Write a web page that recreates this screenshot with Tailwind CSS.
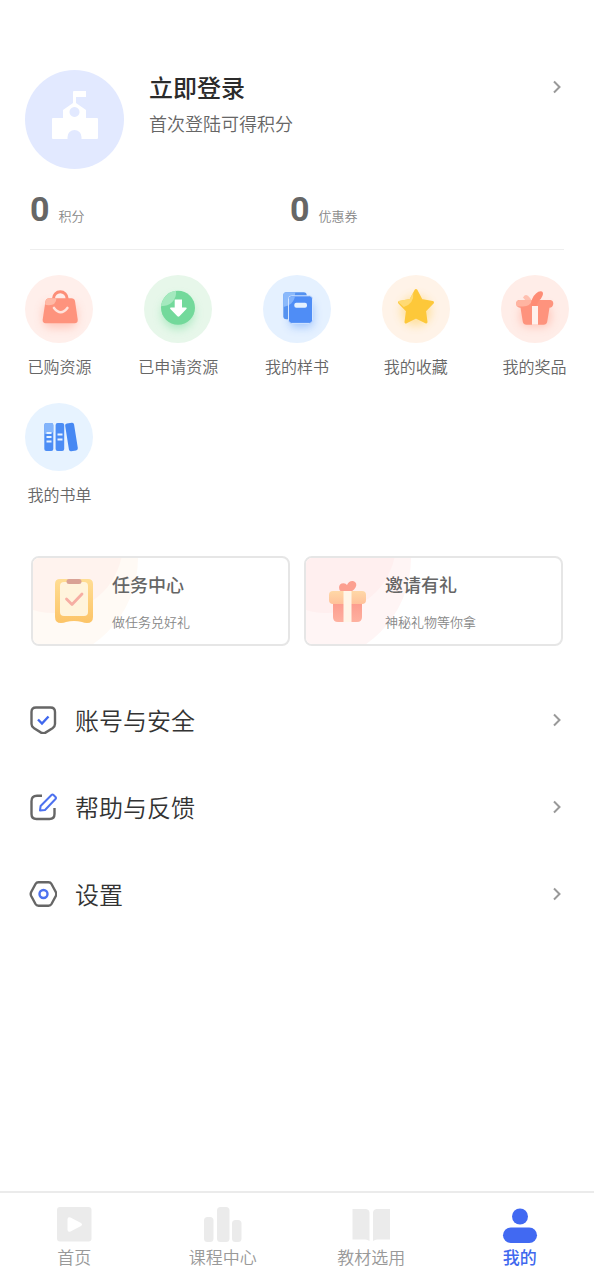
<!DOCTYPE html>
<html lang="zh-CN">
<head>
<meta charset="utf-8">
<meta name="viewport" content="width=device-width, initial-scale=1">
<title>我的</title>
<script src="https://cdn.jsdelivr.net/npm/@tailwindcss/browser@4"></script>
</head>
<body class="flex min-h-screen flex-col bg-white font-['Noto_Sans_CJK_SC',sans-serif] font-[350] text-[#666666]">
<main class="flex-1">
  <header>
    <a href="#login" class="flex items-start pt-[70px] pr-8 pl-[25px]">
      <svg class="size-[99px] shrink-0" viewBox="0 0 99 99" aria-hidden="true">
        <circle cx="49.500" cy="49.500" r="49.500" fill="#e2e9ff"/>
        <path fill="#fff" fill-rule="evenodd" d="M28 48h10v-8l10-7V22q0-1 1-1h12v6H51v6l10 7v8h11q1 0 1 1v19q0 1-1 1H56.500v-2a7 7 0 0 0-14 0v2H28q-1 0-1-1V49q0-1 1-1zM49.500 37a5 5 0 1 0 .01 0z"/>
      </svg>
      <div class="ml-[25px] flex-1">
        <h1 class="text-2xl leading-[34px] font-medium text-[#2b2b2b]">立即登录</h1>
        <p class="text-lg leading-[38px]">首次登陆可得积分</p>
      </div>
      <svg class="mt-[9px] h-4 w-[10px]" viewBox="0 0 10 16" fill="none" stroke="#999" stroke-width="2" aria-hidden="true"><path d="M2 2.500l5.500 5.500L2 13.500"/></svg>
    </a>
    <dl class="mx-[30px] mt-5 grid grid-cols-[260px_1fr] border-b border-[#eeeeee] pb-5">
      <div class="flex flex-row-reverse items-baseline justify-end gap-[9px]">
        <dt class="text-[13px] text-[#888888]">积分</dt>
        <dd class="font-[Roboto,sans-serif] text-[34px] leading-10 font-bold">0</dd>
      </div>
      <div class="flex flex-row-reverse items-baseline justify-end gap-[9px]">
        <dt class="text-[13px] text-[#888888]">优惠券</dt>
        <dd class="font-[Roboto,sans-serif] text-[34px] leading-10 font-bold">0</dd>
      </div>
    </dl>
  </header>

  <nav aria-label="我的资源" class="mt-[25px] grid grid-cols-5 gap-y-[25px] text-base leading-6">
    <a href="#bought" class="flex flex-col items-center gap-[11px]">
      <svg class="size-[68px]" viewBox="0 0 68 68" aria-hidden="true">
        <defs>
          <filter id="soft" x="-50%" y="-50%" width="200%" height="200%"><feGaussianBlur stdDeviation="5"/></filter>
        </defs>
        <circle cx="34" cy="34" r="34" fill="#ffefeb"/>
        <rect x="18" y="28" width="34" height="25" rx="8" fill="#ff8f78" opacity=".4" filter="url(#soft)"/>
        <path d="M28.500 26v-2.500a6.800 6.800 0 0 1 13.600 0V26" fill="none" stroke="#fc8e78" stroke-width="3"/>
        <path d="M24 23.300h22.500q2.800 0 3.500 2.700l2.700 18.500q.3 3.800-3 3.800h-29q-3.300 0-3-3.800L20.500 26q.7-2.700 3.500-2.700z" fill="#fe937d"/>
        <path d="M21 25q1-1.700 3-1.700h7.500q-.5 7-7.500 7-3.500 0-4-1z" fill="#ffb9a6"/>
        <path d="M29 33q6.700 8.500 13.400 0" fill="none" stroke="#ffe3dc" stroke-width="2.600" stroke-linecap="round"/>
      </svg>
      <span>已购资源</span>
    </a>
    <a href="#applied" class="flex flex-col items-center gap-[11px]">
      <svg class="size-[68px]" viewBox="0 0 68 68" aria-hidden="true">
        <circle cx="34" cy="34" r="34" fill="#e7f7ea"/>
        <circle cx="34" cy="38" r="16" fill="#6fdc98" opacity=".5" filter="url(#soft)"/>
        <circle cx="34" cy="32.700" r="17" fill="#73d99b"/>
        <path d="M17.100 31A17 17 0 0 1 32 15.800 13.500 13.500 0 0 1 17.100 31z" fill="#a4e9be"/>
        <path d="M30.700 24.500h7.300v8h4.200q1 .5.200 1.500l-7 7.300q-1 .9-2 0l-7-7.300q-.8-1 .2-1.500h4.100z" fill="#fff"/>
      </svg>
      <span>已申请资源</span>
    </a>
    <a href="#samples" class="flex flex-col items-center gap-[11px]">
      <svg class="size-[68px]" viewBox="0 0 68 68" aria-hidden="true">
        <circle cx="34" cy="34" r="34" fill="#e5f1ff"/>
        <rect x="27" y="28" width="23" height="24" rx="4" fill="#4f8ff8" opacity=".45" filter="url(#soft)"/>
        <rect x="20.300" y="17.300" width="23.400" height="27" rx="3" fill="#5592f0"/>
        <path d="M20.300 31V20.300q0-3 3-3h9q-1 13-12 14.700z" fill="#8ab9fb"/>
        <rect x="25.500" y="20.800" width="24" height="27.600" rx="3" fill="#4f8df6" stroke="#d5e6ff" stroke-width="1"/>
        <path d="M26 30v-6q0-2.700 3-2.700h3q-1 6-6 8.700z" fill="#80b1fb"/>
        <rect x="31.300" y="27.700" width="12.700" height="5" rx="2" fill="#e5f1ff"/>
      </svg>
      <span>我的样书</span>
    </a>
    <a href="#favorites" class="flex flex-col items-center gap-[11px]">
      <svg class="size-[68px]" viewBox="0 0 68 68" aria-hidden="true">
        <circle cx="34" cy="34" r="34" fill="#fff3e8"/>
        <circle cx="34" cy="36" r="15" fill="#ffca45" opacity=".45" filter="url(#soft)"/>
        <path d="M34 15.500l5.200 10 11.300 2-8 8.200 1.500 11.300-10-5-10 5 1.500-11.300-8-8.200 11.300-2z" fill="#fdc83a" stroke="#fdc83a" stroke-width="3" stroke-linejoin="round"/>
        <path d="M16.500 26l11.300-2 3.500-6.500q1 11-9.500 14.500l-5-4.500q-.8-.7-.3-1.500z" fill="#ffda73"/>
      </svg>
      <span>我的收藏</span>
    </a>
    <a href="#prizes" class="flex flex-col items-center gap-[11px]">
      <svg class="size-[68px]" viewBox="0 0 68 68" aria-hidden="true">
        <circle cx="34" cy="34" r="34" fill="#ffede8"/>
        <rect x="19" y="30" width="31" height="22" rx="8" fill="#ff8f78" opacity=".4" filter="url(#soft)"/>
        <path d="M22 22.500q3-5 7 .5l2 3h-6z" fill="#ffc0b0"/>
        <path d="M18 25h31.500q3 .5 2.800 4-.6 3.500-3.800 3.800l-2.300 14q-.6 2.900-3.700 2.900h-17q-3.100 0-3.700-2.900l-2.300-14q-3.700-.3-4.200-3.800-.3-3.500 2.700-4z" fill="#fe937d"/>
        <path d="M18 25h13q-1.500 6.500-9 6.500h-6q-1-1-1-3 .3-3 3-3.500z" fill="#ffb4a1"/>
        <path d="M30 31q.2-8.500 5-12.500 3-2.800 6-2 1.800 1.500.4 4.500-1.400 3.500-3.400 4.500l-3 5.500z" fill="#fe8c75"/>
        <path d="M31 31h6v18.700h-6z" fill="#fff1ed"/>
      </svg>
      <span>我的奖品</span>
    </a>
    <a href="#booklist" class="flex flex-col items-center gap-[11px]">
      <svg class="size-[68px]" viewBox="0 0 68 68" aria-hidden="true">
        <circle cx="34" cy="34" r="34" fill="#e7f3ff"/>
        <rect x="19.300" y="20" width="9" height="28" rx="2" fill="#4c8df5"/>
        <path d="M19.300 31v-9q0-2 2-2h5q2 0 2 2v7q-3 2-9 2z" fill="#83b4fb"/>
        <rect x="30.600" y="20" width="8.600" height="28" rx="2" fill="#4c8df5"/>
        <rect x="42" y="20" width="9" height="28" rx="2" fill="#4688f3" transform="rotate(-9 46.300 34)"/>
        <g stroke="#e7f3ff" stroke-width="2"><path d="M21.500 30h5M21.500 34h5M21.500 38.500h5M32.500 31.500h5M32.500 36.500h5"/></g>
      </svg>
      <span>我的书单</span>
    </a>
  </nav>

  <section aria-label="活动" class="mx-[31px] mt-[50px] grid grid-cols-2 gap-[14px]">
    <a href="#tasks" class="relative flex h-[90px] items-center overflow-hidden rounded-lg border-2 border-[#e6e6e6] pl-[22px]">
      <svg class="absolute top-0 left-0 h-[86px] w-28" viewBox="0 0 112 86" aria-hidden="true">
        <circle cx="0" cy="0" r="105" fill="#fffaf5"/><circle cx="20" cy="-15" r="70" fill="#fff3ee"/>
      </svg>
      <svg class="relative h-[46px] w-[38px]" viewBox="0 0 38 46" aria-hidden="true">
        <defs><linearGradient id="board" x2="0" y2="1"><stop stop-color="#ffdd94"/><stop offset="1" stop-color="#fcc467"/></linearGradient></defs>
        <path d="M5 1h28q5 0 5 5v33q0 6-6 6-3 0-5-1-8-2-16 0-2 1-5 1-6 0-6-6V6q0-5 5-5z" fill="url(#board)"/>
        <rect x="5" y="4" width="28" height="34" rx="4" fill="#fff4dc"/>
        <rect x="11.500" y="1" width="15" height="5" rx="2.500" fill="#d9a295"/>
        <path d="M11.500 21l5.500 5.500L27 16" fill="none" stroke="#f6aea3" stroke-width="2.800" stroke-linecap="round" stroke-linejoin="round"/>
      </svg>
      <div class="relative ml-[19px]">
        <h2 class="text-lg leading-7 font-medium">任务中心</h2>
        <p class="mt-[14px] text-[13px] leading-5 text-[#888888]">做任务兑好礼</p>
      </div>
    </a>
    <a href="#invite" class="relative flex h-[90px] items-center overflow-hidden rounded-lg border-2 border-[#e6e6e6] pl-[22px]">
      <svg class="absolute top-0 left-0 h-[86px] w-28" viewBox="0 0 112 86" aria-hidden="true">
        <circle cx="0" cy="0" r="105" fill="#fff5f5"/><circle cx="20" cy="-15" r="70" fill="#ffefef"/>
      </svg>
      <svg class="relative h-[46px] w-[38px]" viewBox="0 0 38 46" aria-hidden="true">
        <defs>
          <linearGradient id="lid" x2="0" y2="1"><stop stop-color="#ffd8a7"/><stop offset="1" stop-color="#ffc19a"/></linearGradient>
          <linearGradient id="box" x2="0" y2="1"><stop stop-color="#fc9b8d"/><stop offset="1" stop-color="#feb1a0"/></linearGradient>
        </defs>
        <path d="M19 14q-6 1-7.500-2-1.500-5 2-6.500 4-1 5.500 1.500 2-4.500 6-4 5 1.500 2.500 6.500Q25 14 19 14z" fill="#fc9f90"/>
        <path d="M5 24h29v15q0 5-5 5H10q-5 0-5-5z" fill="url(#box)"/>
        <rect x="1" y="13" width="37" height="13" rx="4" fill="url(#lid)"/>
        <path d="M15.500 13h8v31h-8z" fill="#fff5e8"/>
      </svg>
      <div class="relative ml-[19px]">
        <h2 class="text-lg leading-7 font-medium">邀请有礼</h2>
        <p class="mt-[14px] text-[13px] leading-5 text-[#888888]">神秘礼物等你拿</p>
      </div>
    </a>
  </section>

  <ul class="mt-[30px] pr-8 pl-[29px] text-2xl text-[#333333]">
    <li>
      <a href="#security" class="flex h-[87px] items-center">
        <svg class="size-7" viewBox="0 0 28 28" fill="none" stroke-width="2.400" aria-hidden="true">
          <path d="M7 1.500h14.500q4.500 0 4.500 4.500v12q0 2.500-2.500 4.200l-7 4.400q-2.200 1.200-4.400 0l-7-4.400Q2.500 20.500 2.500 18V6q0-4.500 4.500-4.500z" stroke="#666"/>
          <path d="M9 13.500l4 4 6.500-7" stroke="#4068ee"/>
        </svg>
        <span class="ml-[18px] flex-1">账号与安全</span>
        <svg class="h-4 w-[10px]" viewBox="0 0 10 16" fill="none" stroke="#999" stroke-width="2" aria-hidden="true"><path d="M2 2.500l5.500 5.500L2 13.500"/></svg>
      </a>
    </li>
    <li>
      <a href="#help" class="flex h-[87px] items-center">
        <svg class="size-7" viewBox="0 0 28 28" fill="none" stroke-width="2.400" stroke-linejoin="round" aria-hidden="true">
          <path d="M13 2.800H8q-5.500 0-5.500 5.500V21q0 5 5 5h13q5 0 5-5v-6" stroke="#666"/>
          <path d="M11 17.500l.6-4.500L22.500 2q1-1 2 0l2 2q1 1 0 2L16 17z" stroke="#4d71ef" stroke-width="2"/>
        </svg>
        <span class="ml-[18px] flex-1">帮助与反馈</span>
        <svg class="h-4 w-[10px]" viewBox="0 0 10 16" fill="none" stroke="#999" stroke-width="2" aria-hidden="true"><path d="M2 2.500l5.500 5.500L2 13.500"/></svg>
      </a>
    </li>
    <li>
      <a href="#settings" class="flex h-[87px] items-center">
        <svg class="size-7" viewBox="0 0 28 28" fill="none" stroke-width="2.400" aria-hidden="true">
          <path d="M9.500 2.300h10q2 0 3 1.700l4.300 8q1 2 0 4l-4.300 8q-1 1.700-3 1.700h-10q-2 0-3-1.700l-4.300-8q-1-2 0-4l4.300-8q1-1.700 3-1.700z" stroke="#666"/>
          <circle cx="14.500" cy="14" r="4" stroke="#4d71ef"/>
        </svg>
        <span class="ml-[18px] flex-1">设置</span>
        <svg class="h-4 w-[10px]" viewBox="0 0 10 16" fill="none" stroke="#999" stroke-width="2" aria-hidden="true"><path d="M2 2.500l5.500 5.500L2 13.500"/></svg>
      </a>
    </li>
  </ul>
</main>

<nav aria-label="主导航" class="grid grid-cols-4 border-t-2 border-[#ebebeb] pt-[14px] pb-[11px] text-[17px] leading-6 text-[#999999]">
  <a href="#home" class="flex flex-col items-center gap-[2px]">
    <svg class="h-9 w-10" viewBox="0 0 40 36" aria-hidden="true">
      <rect x="3" y="0" width="34.500" height="34.500" rx="3" fill="#ebebeb"/>
      <path d="M13.500 12.500q0-3 3-2l10.500 5.500q2 1.500 0 3l-10.500 5.500q-3 1-3-2z" fill="#fff"/>
    </svg>
    <span>首页</span>
  </a>
  <a href="#courses" class="flex flex-col items-center gap-[2px]">
    <svg class="h-9 w-10" viewBox="0 0 40 36" fill="#ebebeb" aria-hidden="true">
      <rect x="1" y="10" width="9.500" height="25" rx="3.500"/><rect x="14" y="0" width="12.500" height="35" rx="3.500"/><rect x="29" y="13" width="9.500" height="22" rx="3.500"/>
    </svg>
    <span>课程中心</span>
  </a>
  <a href="#textbooks" class="flex flex-col items-center gap-[2px]">
    <svg class="h-9 w-10" viewBox="0 0 40 36" fill="#ebebeb" aria-hidden="true">
      <path d="M1.500 2H15q3.500.5 3.500 4v28q-2-1.500-4-1.500h-13zM39 2H25.500Q22 2.500 22 6v28q2-1.500 4-1.500h13z"/>
    </svg>
    <span>教材选用</span>
  </a>
  <a href="#mine" aria-current="page" class="flex flex-col items-center gap-[2px] font-medium text-[#4068ee]">
    <svg class="h-9 w-10" viewBox="0 0 40 36" fill="#4169f2" aria-hidden="true">
      <circle cx="20" cy="9.500" r="8"/><rect x="3" y="20.500" width="34" height="15.500" rx="7.750"/>
    </svg>
    <span>我的</span>
  </a>
</nav>
</body>
</html>
